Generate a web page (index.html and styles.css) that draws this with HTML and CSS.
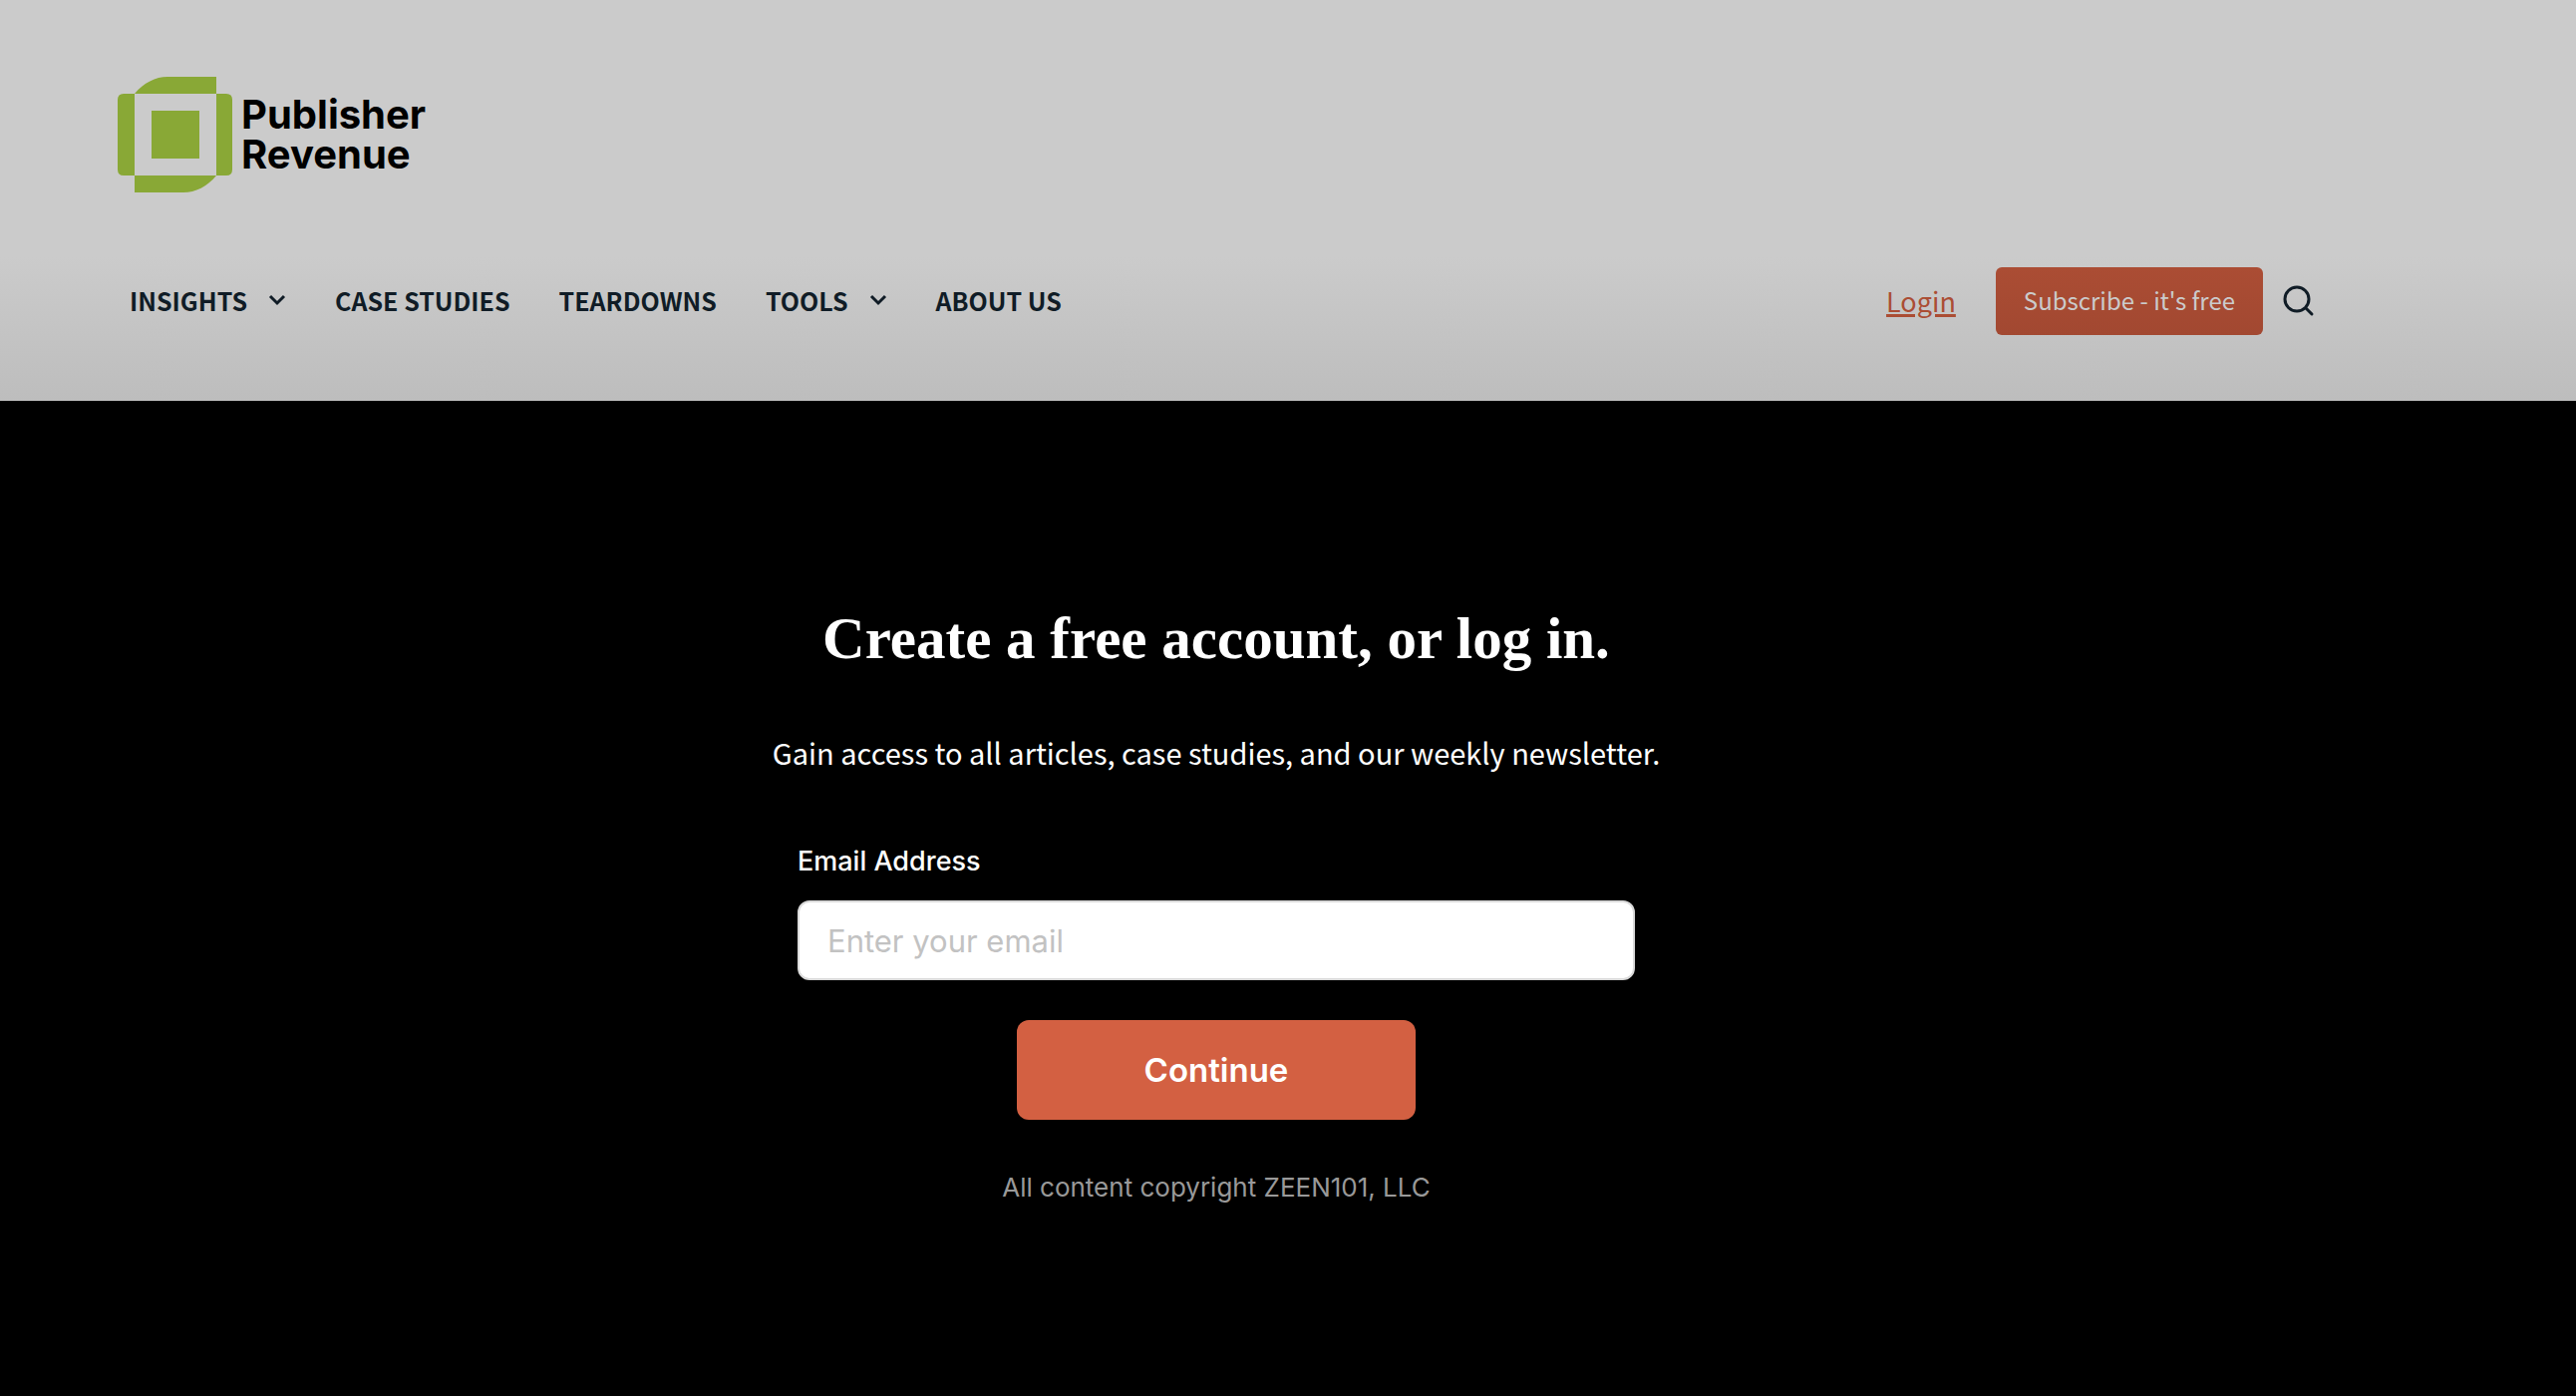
FILE: index.html
```
<!DOCTYPE html>
<html lang="en">
<head>
    <meta charset="UTF-8">
    <meta name="viewport" content="width=device-width, initial-scale=1.0">
    <title>Publisher Revenue</title>
    <link rel="stylesheet" href="styles.css">
</head>
<body>
    <header class="site-header">
        <a class="logo" href="#">
            <svg class="logo-mark" viewBox="0 0 116 116" aria-hidden="true">
                <path d="M17 17C26 6 38 0 50 0H99V17Z"/>
                <path d="M17 99H99C90 110 78 116 66 116H17Z"/>
                <path d="M17 17V99H6Q0 99 0 93V23Q0 17 6 17Z"/>
                <path d="M99 17H109Q115 17 115 23V93Q115 99 109 99H99Z"/>
                <path d="M34 34H82V82H34Z"/>
            </svg>
            <span class="logo-text">Publisher<br>Revenue</span>
        </a>
        <div class="bar">
            <nav class="menu">
                <a href="#">INSIGHTS
                    <svg class="chevron" viewBox="0 0 18 12" aria-hidden="true"><path d="M2 2L9 9L16 2"/></svg>
                </a>
                <a href="#">CASE STUDIES</a>
                <a href="#">TEARDOWNS</a>
                <a href="#">TOOLS
                    <svg class="chevron" viewBox="0 0 18 12" aria-hidden="true"><path d="M2 2L9 9L16 2"/></svg>
                </a>
                <a href="#">ABOUT US</a>
            </nav>
            <div class="actions">
                <a class="login" href="#">Login</a>
                <button class="subscribe" type="button">Subscribe - it's free</button>
                <button class="search" type="button" aria-label="Search">
                    <svg viewBox="0 0 32 32" aria-hidden="true"><circle cx="14" cy="14" r="12"/><path d="M23 23L29 29"/></svg>
                </button>
            </div>
        </div>
    </header>

    <main class="signup">
        <h1>Create a free account, or log in.</h1>
        <p class="intro">Gain access to all articles, case studies, and our weekly newsletter.</p>
        <form class="signup-form">
            <label for="email">Email Address</label>
            <input type="email" id="email" placeholder="Enter your email">
            <button class="continue" type="submit">Continue</button>
        </form>
        <p class="copyright">All content copyright ZEEN101, LLC</p>
    </main>
</body>
</html>
```
FILE: styles.css
```
* {
    box-sizing: border-box;
}
body {
    margin: 0;
    background-color: #000;
    font-family: "Noto Sans CJK SC", "Noto Sans", sans-serif;
}
button {
    border: none;
    cursor: pointer;
    font-family: inherit;
}

/* header */
.site-header {
    padding: 77px 262px 66px 118px;
    background: linear-gradient(#cbcbcb 64%, #bdbdbd);
}
.logo {
    display: inline-flex;
    align-items: center;
    gap: 8px;
    color: #000;
    text-decoration: none;
    vertical-align: top;
}
.logo-mark {
    width: 116px;
    height: 116px;
    fill: #89a836;
}
.logo-text {
    font: bold 40px/40px Inter, sans-serif;
}
.bar {
    display: flex;
    justify-content: space-between;
    align-items: center;
    margin-top: 75px;
    padding-left: 12px;
}
.menu {
    display: flex;
    align-items: center;
    gap: 49px;
    padding-bottom: 2px;
}
.menu a {
    display: flex;
    align-items: center;
    gap: 21px;
    color: #101c26;
    font-size: 25px;
    font-weight: bold;
    line-height: 36px;
    text-decoration: none;
}
.chevron {
    width: 18px;
    height: 12px;
    fill: none;
    stroke: #101c26;
    stroke-width: 3;
}
.actions {
    display: flex;
    align-items: center;
}
.login {
    margin-right: 40px;
    color: #ab4d34;
    font-size: 27px;
    line-height: 36px;
    text-decoration-thickness: 3px;
}
.subscribe {
    height: 68px;
    padding: 0 28px 3px;
    border-radius: 6px;
    background: linear-gradient(#ab4d34, #a24831);
    color: #cbcbcb;
    font-size: 24px;
}
.search {
    display: flex;
    margin-left: 20px;
    padding: 0;
    background: none;
}
.search svg {
    width: 32px;
    height: 32px;
    fill: none;
    stroke: #101c26;
    stroke-width: 3;
    stroke-linecap: round;
}

/* sign up */
.signup {
    display: flex;
    flex-direction: column;
    align-items: center;
    padding: 204px 144px 0 0;
    color: #fff;
}
h1 {
    margin: 0;
    font: bold 59px/68px "Liberation Serif", serif;
}
.intro {
    margin: 56px 0 0;
    font-size: 29px;
    line-height: 48px;
}
.signup-form {
    display: flex;
    flex-direction: column;
    width: 100%;
    max-width: 840px;
    margin-top: 68px;
    font-family: Inter, sans-serif;
}
.signup-form label {
    font-size: 27px;
    font-weight: 500;
    line-height: 36px;
}
.signup-form input {
    height: 80px;
    margin-top: 21px;
    padding: 0 28px;
    border: 2px solid #dadada;
    border-radius: 12px;
    background-color: #fff;
    font-family: inherit;
    font-size: 31px;
}
.signup-form input::placeholder {
    color: #c2c2c2;
}
.continue {
    align-self: center;
    width: 400px;
    height: 100px;
    margin-top: 40px;
    border-radius: 12px;
    background-color: #d36042;
    color: #fff;
    font-size: 33px;
    font-weight: 600;
}
.copyright {
    margin: 50px 0 0;
    color: #999;
    font-family: Inter, sans-serif;
    font-size: 26px;
    line-height: 36px;
}
```
